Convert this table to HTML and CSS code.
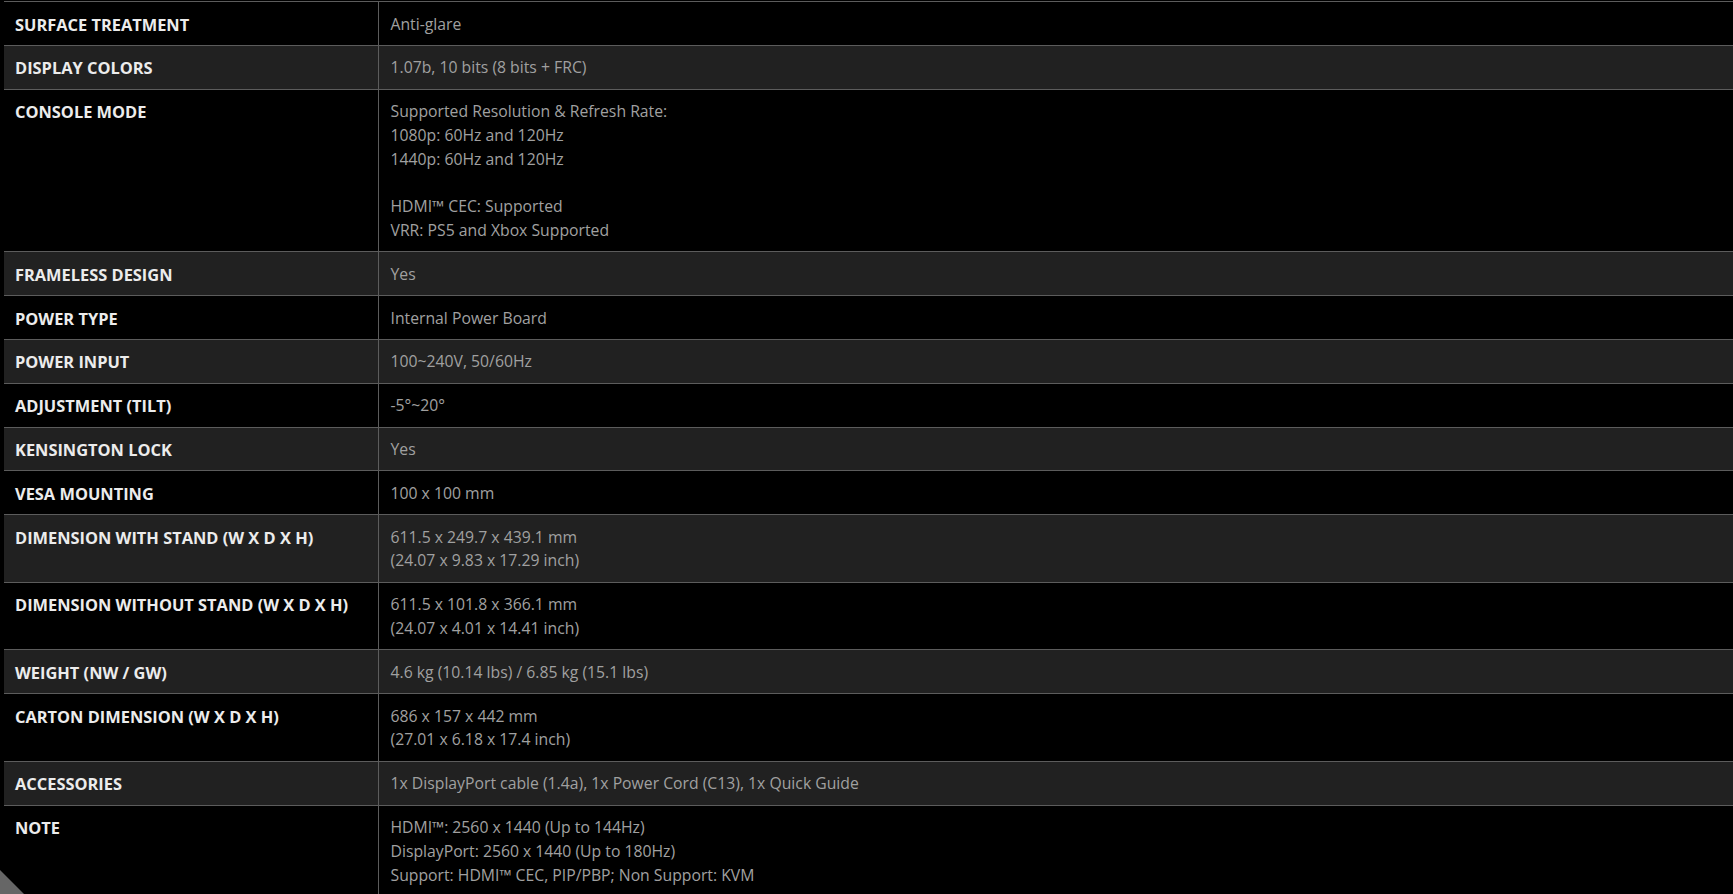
FILE: index.html
```html
<!DOCTYPE html>
<html lang="en">
<head>
<meta charset="utf-8">
<title>Specifications</title>
<link rel="stylesheet" href="styles.css">
</head>
<body>
<table class="spec">
  <tbody>
    <tr class="row"><th class="key">SURFACE TREATMENT</th><td class="val">Anti-glare</td></tr>
    <tr class="row alt"><th class="key">DISPLAY COLORS</th><td class="val">1.07b, 10 bits (8 bits + FRC)</td></tr>
    <tr class="row"><th class="key">CONSOLE MODE</th><td class="val">Supported Resolution &amp; Refresh Rate:<br>1080p: 60Hz and 120Hz<br>1440p: 60Hz and 120Hz<br><br>HDMI™ CEC: Supported<br>VRR: PS5 and Xbox Supported</td></tr>
    <tr class="row alt"><th class="key">FRAMELESS DESIGN</th><td class="val">Yes</td></tr>
    <tr class="row"><th class="key">POWER TYPE</th><td class="val">Internal Power Board</td></tr>
    <tr class="row alt"><th class="key">POWER INPUT</th><td class="val">100~240V, 50/60Hz</td></tr>
    <tr class="row"><th class="key">ADJUSTMENT (TILT)</th><td class="val">-5°~20°</td></tr>
    <tr class="row alt"><th class="key">KENSINGTON LOCK</th><td class="val">Yes</td></tr>
    <tr class="row"><th class="key">VESA MOUNTING</th><td class="val">100 x 100 mm</td></tr>
    <tr class="row alt"><th class="key">DIMENSION WITH STAND (W X D X H)</th><td class="val">611.5 x 249.7 x 439.1 mm<br>(24.07 x 9.83 x 17.29 inch)</td></tr>
    <tr class="row"><th class="key">DIMENSION WITHOUT STAND (W X D X H)</th><td class="val">611.5 x 101.8 x 366.1 mm<br>(24.07 x 4.01 x 14.41 inch)</td></tr>
    <tr class="row alt"><th class="key">WEIGHT (NW / GW)</th><td class="val">4.6 kg (10.14 lbs) / 6.85 kg (15.1 lbs)</td></tr>
    <tr class="row"><th class="key">CARTON DIMENSION (W X D X H)</th><td class="val">686 x 157 x 442 mm<br>(27.01 x 6.18 x 17.4 inch)</td></tr>
    <tr class="row alt"><th class="key">ACCESSORIES</th><td class="val">1x DisplayPort cable (1.4a), 1x Power Cord (C13), 1x Quick Guide</td></tr>
    <tr class="row"><th class="key">NOTE</th><td class="val">HDMI™: 2560 x 1440 (Up to 144Hz)<br>DisplayPort: 2560 x 1440 (Up to 180Hz)<br>Support: HDMI™ CEC, PIP/PBP; Non Support: KVM</td></tr>
  </tbody>
</table>
<div class="corner"></div>
</body>
</html>
```
FILE: styles.css
```css
html, body {
  margin: 0;
  padding: 0;
  background: #000;
  overflow: hidden;
}
body {
  font-family: "Open Sans", "Noto Sans", sans-serif;
  padding: 1px 0 0 4px;
}
.spec {
  width: 100%;
  border-collapse: collapse;
  border-top: 1px solid #5c5c5c;
}
.row {
  background: #000;
  border-bottom: 1px solid #5c5c5c;
}
.row.alt {
  background: #212121;
}
.key {
  width: 374px;
  box-sizing: border-box;
  text-align: left;
  vertical-align: top;
  padding: 10.5px 11px 8.5px 11px;
  font-size: 16.4px;
  font-weight: 700;
  line-height: 23.8px;
  color: #ececec;
}
.val {
  vertical-align: top;
  padding: 10.5px 11px 8.5px 12px;
  border-left: 1px solid #5c5c5c;
  font-size: 15.75px;
  line-height: 23.8px;
  color: #a0a0a0;
}
.corner {
  position: fixed;
  left: 0;
  bottom: 0;
  width: 24px;
  height: 24px;
  background: #666;
  clip-path: polygon(0 0, 100% 100%, 0 100%);
}
```
